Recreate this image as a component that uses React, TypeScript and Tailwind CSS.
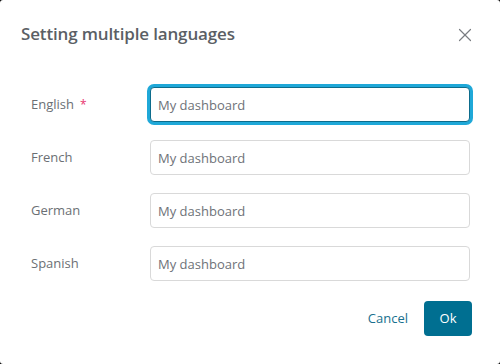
import { X } from "lucide-react";

const LANGUAGES = [
  { label: "English", required: true, focused: true },
  { label: "French" },
  { label: "German" },
  { label: "Spanish" },
];

const App = () => {
  return (
    <div className="h-[364px] w-[500px] bg-black font-['Open_Sans',sans-serif]">
      <div className="flex h-full flex-col rounded-[3px] bg-white pl-[21px] pr-[30px] pt-[22px]">
        <div className="flex h-[24px] items-center justify-between">
          <h2 className="text-[17px] font-semibold leading-[24px] tracking-[-0.15px] text-[#5b5f65]">
            Setting multiple languages
          </h2>
          <button type="button" className="-mr-[6px] mt-[1px] text-[#7a7d82]">
            <X size={22} strokeWidth={1.3} />
          </button>
        </div>

        <div className="mt-[41px] flex flex-col gap-[18px]">
          {LANGUAGES.map((lang) => (
            <div key={lang.label} className="flex items-center">
              <label className="flex w-[129px] items-center pl-[10px] text-[13px] text-[#6b6f74]">
                {lang.label}
                {lang.required && (
                  <span className="ml-[6px] text-[12px] text-[#e8336f]">*</span>
                )}
              </label>
              <input
                type="text"
                placeholder="My dashboard"
                className={`h-[35px] w-[320px] rounded-[4px] border bg-white px-[7px] text-[13px] outline-none placeholder:text-[#6e7278] ${
                  lang.focused
                    ? "border-[#0d6c8c] ring-[3px] ring-[#1fa8d8]"
                    : "border-[#d9d9d9]"
                }`}
              />
            </div>
          ))}
        </div>

        <div className="mt-[20px] flex items-center justify-end gap-[16px]">
          <button type="button" className="text-[13px] text-[#17708e]">
            Cancel
          </button>
          <button
            type="button"
            className="-mr-[2px] h-[35px] w-[48px] rounded-[4px] bg-[#006f91] text-[13px] text-white"
          >
            Ok
          </button>
        </div>
      </div>
    </div>
  );
};

export default App;
